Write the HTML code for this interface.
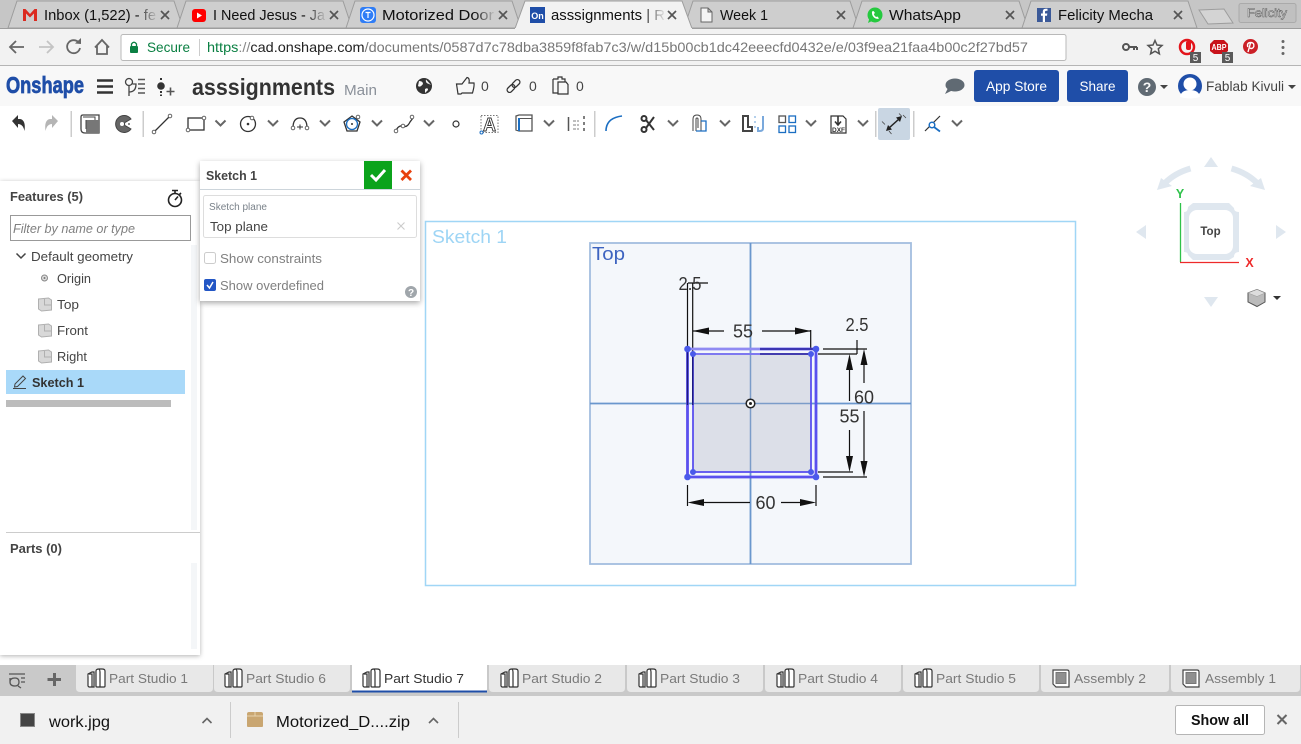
<!DOCTYPE html>
<html><head><meta charset="utf-8"><title>asssignments</title>
<style>
html,body{margin:0;padding:0;background:#fff;width:1301px;height:744px;overflow:hidden}
svg{display:block}
text{font-family:"Liberation Sans",sans-serif;white-space:pre}
</style></head><body>
<svg width="1301" height="744" viewBox="0 0 1301 744" xmlns="http://www.w3.org/2000/svg">
<defs>
<filter id="sh" x="-20%" y="-20%" width="140%" height="140%"><feDropShadow dx="0" dy="2" stdDeviation="3" flood-color="#000" flood-opacity=".35"/></filter>
<filter id="sh2" x="-10%" y="-5%" width="120%" height="110%"><feDropShadow dx="0" dy="1" stdDeviation="2.5" flood-color="#000" flood-opacity=".3"/></filter>
<linearGradient id="f1"><stop offset="0" stop-color="#cecece" stop-opacity="0"/><stop offset="1" stop-color="#cecece"/></linearGradient>
<linearGradient id="f2"><stop offset="0" stop-color="#f2f2f2" stop-opacity="0"/><stop offset="1" stop-color="#f2f2f2"/></linearGradient>
<g id="chev"><path d="M-5 -2.5L0 2.5L5 -2.5" fill="none" stroke="#666" stroke-width="2"/></g>
<g id="tx"><path d="M-4 -4L4 4M4 -4L-4 4" stroke="#555" stroke-width="1.7" fill="none"/></g>
<g id="ps" fill="#fff" stroke="#333" stroke-width="1.2"><path d="M1 6L5 4H7V19H2L1 18Z"/><path d="M1 6H5V19"/><path d="M9 3Q9 1 12 1H15Q18 1 18 3V18Q18 19 17 19H10Q9 19 9 18Z"/><path d="M12 1Q13 2 13 4V19" fill="none"/></g>
<g id="as"><path d="M1 1H15Q17 1 17 3V18H4L1 15Z" fill="#fff" stroke="#444" stroke-width="1.2"/><rect x="4" y="3.5" width="10" height="11" fill="#8f8f8f" stroke="#777"/></g>
<g id="pl"><path d="M0 1L10 0L13 2V12L3 13L0 11Z" fill="#d8d8d8" stroke="#b0b0b0"/><path d="M6 1V7H13" fill="none" stroke="#b0b0b0"/></g>
</defs>

<!-- CHROME TABS -->
<rect width="1301" height="29" fill="#c6c6c6"/>
<g fill="#cecece" stroke="#9d9d9d">
<path d="M8 28L17 1H174L183 28Z"/><path d="M177 28L186 1H343L352 28Z"/><path d="M346 28L355 1H512L521 28Z"/>
<path d="M684 28L693 1H850L859 28Z"/><path d="M853 28L862 1H1019L1028 28Z"/><path d="M1022 28L1031 1H1188L1197 28Z"/>
</g>
<path d="M1199 10L1224 9L1233 23L1208 24Z" fill="#d4d4d4" stroke="#9d9d9d"/>
<rect x="1239" y="3.5" width="57" height="19" rx="2" fill="#c0c0c0" stroke="#aaa"/>
<text x="1267" y="17" font-size="12" text-anchor="middle" fill="#f2f2f2" stroke="#555" stroke-width=".5" textLength="40" lengthAdjust="spacingAndGlyphs">Felicity</text>
<path d="M515 28.5L525 1H682L692 28.5Z" fill="#f2f2f2" stroke="#9d9d9d"/>
<g font-size="14.5" fill="#111">
<text x="44" y="20" textLength="112" lengthAdjust="spacingAndGlyphs">Inbox (1,522) - fe</text>
<text x="213" y="20" textLength="112" lengthAdjust="spacingAndGlyphs">I Need Jesus - Ja</text>
<text x="382" y="20" textLength="112" lengthAdjust="spacingAndGlyphs">Motorized Door</text>
<text x="551" y="20" textLength="114" lengthAdjust="spacingAndGlyphs">asssignments | R</text>
<text x="720" y="20" textLength="48" lengthAdjust="spacingAndGlyphs">Week 1</text>
<text x="889" y="20" textLength="72" lengthAdjust="spacingAndGlyphs">WhatsApp</text>
<text x="1058" y="20" textLength="95" lengthAdjust="spacingAndGlyphs">Felicity Mecha</text>
</g>
<rect x="136" y="5" width="22" height="20" fill="url(#f1)"/><rect x="305" y="5" width="22" height="20" fill="url(#f1)"/><rect x="474" y="5" width="22" height="20" fill="url(#f1)"/><rect x="643" y="5" width="23" height="20" fill="url(#f2)"/>
<use href="#tx" x="165" y="15"/><use href="#tx" x="334" y="15"/><use href="#tx" x="503" y="15"/><use href="#tx" x="672" y="15"/><use href="#tx" x="841" y="15"/><use href="#tx" x="1010" y="15"/><use href="#tx" x="1178" y="15"/>
<!-- favicons -->
<path d="M23 21V9H25.500L30 14L34.500 9H37V21H34V13.500L30 17.500L26 13.500V21Z" fill="#db2a20"/>
<rect x="192" y="9" width="14" height="13" rx="3" fill="#f00"/><path d="M197 12.500L202 15.500L197 18.500Z" fill="#fff"/>
<rect x="360" y="7" width="16" height="16" rx="3" fill="#2f7df6"/><circle cx="368" cy="15" r="6" fill="none" stroke="#fff" stroke-width="1.2"/><path d="M365.500 12.500H370.500M368 12.500V18" stroke="#fff" stroke-width="1.2"/>
<rect x="530" y="7" width="15" height="16" fill="#1f4ea8"/><text x="537.500" y="19" font-size="9" font-weight="700" fill="#fff" text-anchor="middle">On</text>
<path d="M701 8H708L712 12V22H701Z M708 8V12H712" fill="#f4f4f4" stroke="#666"/>
<circle cx="875" cy="15" r="7.500" fill="#25c93f"/><path d="M872 11.500Q871.500 15 874 17.500Q876.500 19.500 879 18.500L877.500 16.500L876 17Q874 15.500 873.800 14L875 13L873.500 11Z" fill="#fff"/><path d="M868 23L869.500 18L872 21Z" fill="#25c93f"/>
<rect x="1037" y="8" width="14" height="14" fill="#3b5998"/><path d="M1045 22V15.800H1047L1047.300 13.500H1045V12Q1045 10.800 1046.500 10.800H1047.500V8.800H1045.500Q1042.800 8.800 1042.800 11.800V13.500H1041V15.800H1042.800V22Z" fill="#fff"/>

<!-- CHROME ADDRESS BAR -->
<rect y="28" width="1301" height="38" fill="#f2f2f2"/>
<path d="M0 28.500H515M692 28.500H1301" stroke="#9d9d9d"/>
<rect y="65" width="1301" height="1" fill="#b5b5b5"/>
<path d="M24 47H10M16 41L10 47L16 53" fill="none" stroke="#666" stroke-width="1.800"/>
<path d="M39 47H53M47 41L53 47L47 53" fill="none" stroke="#c4c4c4" stroke-width="1.800"/>
<path d="M79 43A6.500 6.500 0 1 0 80 48" fill="none" stroke="#666" stroke-width="1.800"/><path d="M75 43.500L81 44V38Z" fill="#666"/>
<path d="M95 47.500L102 40L109 47.500M97 46V54H107V46" fill="none" stroke="#666" stroke-width="1.800"/>
<rect x="121" y="34.500" width="945" height="26" rx="2" fill="#fff" stroke="#b9b9b9"/>
<rect x="130" y="46" width="8" height="7" rx="1" fill="#0b8043"/><path d="M131.500 46V44Q134 40.500 136.500 44V46" fill="none" stroke="#0b8043" stroke-width="1.300"/>
<text x="147" y="52" font-size="14" fill="#0b8043" textLength="43" lengthAdjust="spacingAndGlyphs">Secure</text>
<rect x="199" y="39" width="1" height="17" fill="#ccc"/>
<text x="207" y="52" font-size="14" textLength="821" lengthAdjust="spacingAndGlyphs"><tspan fill="#0b8043">https</tspan><tspan fill="#888">://</tspan><tspan fill="#222">cad.onshape.com</tspan><tspan fill="#777">/documents/0587d7c78dba3859f8fab7c3/w/d15b00cb1dc42eeecfd0432e/e/03f9ea21faa4b00c2f27bd57</tspan></text>
<circle cx="1126" cy="47" r="3" fill="none" stroke="#555" stroke-width="2"/><path d="M1129 47H1137M1134 47V50M1137 47V50" stroke="#555" stroke-width="2" fill="none"/>
<path d="M1155 40.500L1157 45L1162 45.500L1158.300 48.800L1159.400 53.800L1155 51.200L1150.600 53.800L1151.700 48.800L1148 45.500L1153 45Z" fill="none" stroke="#555" stroke-width="1.500"/>
<circle cx="1187" cy="47" r="7" fill="none" stroke="#e3141b" stroke-width="2.500"/><rect x="1186" y="41" width="5" height="9" rx="2" fill="#e3141b"/>
<rect x="1190" y="52" width="11" height="11" fill="#5a5a5a"/><text x="1195.500" y="61" font-size="10" fill="#fff" text-anchor="middle">5</text>
<path d="M1214 40H1224L1228 44V51L1224 54H1214L1210 51V44Z" fill="#c8131b"/><text x="1219" y="50" font-size="8" font-weight="700" fill="#fff" text-anchor="middle" textLength="15" lengthAdjust="spacingAndGlyphs">ABP</text>
<rect x="1222" y="52" width="11" height="11" fill="#5a5a5a"/><text x="1227.500" y="61" font-size="10" fill="#fff" text-anchor="middle">5</text>
<circle cx="1250.500" cy="46.500" r="7.500" fill="#cb2027"/><path d="M1248 52L1250.500 43M1247.800 47Q1246.500 42.500 1251 42.500Q1254.500 42.800 1253.800 46.500Q1252.500 49.500 1250 48" fill="none" stroke="#fff" stroke-width="1.400"/>
<g fill="#666"><circle cx="1283" cy="41.500" r="1.500"/><circle cx="1283" cy="47.500" r="1.500"/><circle cx="1283" cy="53.500" r="1.500"/></g>

<!-- ONSHAPE HEADER -->
<rect y="66" width="1301" height="40" fill="#f8f8f8"/>
<text x="6" y="93" font-size="23" font-weight="700" fill="#1f4ea8" textLength="78" lengthAdjust="spacingAndGlyphs" stroke="#1f4ea8" stroke-width=".7">Onshape</text>
<path d="M97 80.500H113M97 86.500H113M97 92.500H113" stroke="#333" stroke-width="2.600"/>
<g fill="none" stroke="#444" stroke-width="1.300"><circle cx="129" cy="82" r="3.500"/><path d="M129 85.500V96M129 92Q136 92 136 84H132.500"/><path d="M138 79.500H145M138 84H145M138 88.500H145M138 93H145" stroke="#555" stroke-width="1.500"/></g>
<circle cx="161" cy="86" r="3.800" fill="#333"/><path d="M161 78V81M161 91V96" stroke="#333" stroke-width="2" stroke-dasharray="2 1.500"/><path d="M166.500 91.500H174.500M170.500 87.500V95.500" stroke="#555" stroke-width="1.600"/>
<text x="192" y="95" font-size="23" font-weight="700" fill="#333" textLength="143" lengthAdjust="spacingAndGlyphs">asssignments</text>
<text x="344" y="95" font-size="15" fill="#8a9099" textLength="33" lengthAdjust="spacingAndGlyphs">Main</text>
<circle cx="424" cy="86" r="8" fill="#333"/><path d="M419 81Q423 81 423 84Q420 88 418 86ZM426 79.500Q425 83 429 84L431 85M425 89Q428 87 428 90L425 93Z" fill="#f8f8f8"/>
<path d="M456.500 84H462L467 77.500Q470 78 469 83H474Q474.500 86 472.500 93H462L461 94H458Z" fill="none" stroke="#333" stroke-width="1.200"/>
<text x="481" y="91" font-size="14" fill="#444">0</text>
<g fill="none" stroke="#333" stroke-width="1.300" transform="rotate(-45 513.500 86)"><rect x="505.500" y="83.500" width="9" height="5" rx="2.500"/><rect x="512.500" y="83.500" width="9" height="5" rx="2.500"/></g>
<text x="529" y="91" font-size="14" fill="#444">0</text>
<path d="M553 79H558V77H562V79H565V82M553 79V93H558M558 82H566L568 84.500V94H558Z" fill="none" stroke="#333" stroke-width="1.200"/>
<text x="576" y="91" font-size="14" fill="#444">0</text>
<ellipse cx="955" cy="85" rx="9.500" ry="6.500" fill="#606a73"/><path d="M948 88L945 94L953 90Z" fill="#606a73"/>
<rect x="974" y="70" width="85" height="32" rx="3" fill="#1f4ea8"/><text x="1016.500" y="91" font-size="14" fill="#fff" text-anchor="middle" textLength="61" lengthAdjust="spacingAndGlyphs">App Store</text>
<rect x="1067" y="70" width="61" height="32" rx="3" fill="#1f4ea8"/><text x="1097.500" y="91" font-size="14" fill="#fff" text-anchor="middle" textLength="36" lengthAdjust="spacingAndGlyphs">Share</text>
<circle cx="1147" cy="87" r="9" fill="#606a73"/><text x="1147" y="92" font-size="14" font-weight="700" fill="#f8f8f8" text-anchor="middle">?</text>
<path d="M1160 85H1168L1164 89Z" fill="#444"/>
<circle cx="1190" cy="86" r="12" fill="#1f4ea8"/><circle cx="1190" cy="84" r="6.500" fill="#fff"/><path d="M1180 97Q1181 90 1190 90Q1199 90 1200 97Q1190 100 1180 97Z" fill="#fff"/>
<text x="1206" y="91" font-size="14" fill="#444" textLength="78" lengthAdjust="spacingAndGlyphs">Fablab Kivuli</text>
<path d="M1288 85H1296L1292 89Z" fill="#444"/>

<!-- SKETCH TOOLBAR -->
<rect y="106" width="1301" height="40" fill="#fff"/>
<path d="M12 121L18 115V119H20Q26 120 24.500 131Q23 124 18 124V128Z" fill="#333"/>
<path d="M58 121L52 115V119H50Q44 120 45.500 131Q47 124 52 124V128Z" fill="#b5b5b5"/>
<g fill="#ccc"><rect x="70.500" y="111" width="1.500" height="26"/><rect x="142.500" y="111" width="1.500" height="26"/><rect x="594" y="111" width="1.500" height="26"/><rect x="875" y="111" width="1.500" height="26"/><rect x="913" y="111" width="1.500" height="26"/></g>
<path d="M81 117Q81 115 83 115H99V133H85Q81 133 81 129Z" fill="#fff" stroke="#444" stroke-width="1.300"/><rect x="86" y="120" width="13" height="13" fill="#777"/><path d="M83 117H95V120M86 120V129" fill="none" stroke="#444"/>
<path d="M131 119A8.500 8.500 0 1 0 131 129L125 125.500Q124 124 125 122.500Z" fill="#666" stroke="#444"/><circle cx="122" cy="124" r="2" fill="#fff"/><circle cx="129" cy="124" r="1" fill="#666"/>
<g fill="none" stroke="#333" stroke-width="1.300">
<path d="M155 131L169 117"/>
<rect x="188" y="118" width="16" height="12"/>
<circle cx="248" cy="124" r="7.500"/>
<path d="M293 128Q293 118 300 118Q307 118 307 128"/><path d="M297 127H303M300 124.500V129.500" stroke-width="1"/>
<path d="M352 116L360 122L357 131H347L344 122Z"/>
<path d="M396 131Q398 125 403 126Q407 128 410 122L413 118"/>
<circle cx="456" cy="124" r="3" stroke-width="1.200"/>
</g>
<circle cx="248" cy="124" r="1.300" fill="#333"/><circle cx="352" cy="124" r="5.500" fill="none" stroke="#1b6ec2" stroke-width="1.300"/><circle cx="352" cy="124" r="1" fill="#333"/>
<g fill="#fff" stroke="#555" stroke-width=".9"><circle cx="154" cy="132" r="1.800"/><circle cx="170" cy="116" r="1.800"/><circle cx="188" cy="130" r="1.800"/><circle cx="204" cy="118" r="1.800"/><circle cx="252" cy="118" r="1.800"/><circle cx="293" cy="128" r="1.800"/><circle cx="307" cy="128" r="1.800"/><circle cx="358" cy="117" r="1.800"/><circle cx="396" cy="131" r="1.800"/><circle cx="403" cy="126" r="1.800"/><circle cx="412" cy="117" r="1.800"/></g>
<use href="#chev" x="220.500" y="123"/><use href="#chev" x="273" y="123"/><use href="#chev" x="325" y="123"/><use href="#chev" x="377" y="123"/><use href="#chev" x="429" y="123"/><use href="#chev" x="549" y="123"/><use href="#chev" x="673" y="123"/><use href="#chev" x="725" y="123"/><use href="#chev" x="811" y="123"/><use href="#chev" x="863" y="123"/><use href="#chev" x="957" y="123"/>
<rect x="481" y="115.500" width="17" height="17" fill="none" stroke="#777" stroke-dasharray="1.500 1.500"/>
<text x="489.500" y="131" font-size="18" font-weight="700" fill="#fff" stroke="#333" stroke-width=".9" text-anchor="middle">A</text>
<circle cx="481.500" cy="132.500" r="1.500" fill="#fff" stroke="#1b6ec2"/>
<path d="M516 116L519 115H532V131H519L516 130Z" fill="#fff" stroke="#555" stroke-width="1.300"/><path d="M519 118.500H532" stroke="#555" fill="none"/><path d="M519 118V131" stroke="#1b6ec2" stroke-width="2" fill="none"/>
<path d="M568.500 117V131" stroke="#555" stroke-width="1.500"/><path d="M584 116V133" stroke="#555" stroke-width="1.500" stroke-dasharray="3 3"/><path d="M573 121H579M573 125H579M573 129H579" stroke="#999" stroke-width="1.200" fill="none" stroke-dasharray="3 1"/>
<path d="M606 131Q606 118 622 116" fill="none" stroke="#1b6ec2" stroke-width="1.600"/>
<g fill="none" stroke="#333" stroke-width="2"><circle cx="644" cy="118.500" r="2.500"/><circle cx="644" cy="129.500" r="2.500"/><path d="M646 120L654 130M646 128L654 117"/></g>
<path d="M693 131V119Q693 115 697 115Q701 115 701 119V131M696 131V119Q696 118 697 118Q698 118 698 119V128" fill="none" stroke="#444" stroke-width="1"/><path d="M701 121H706V131H696" fill="none" stroke="#1b6ec2" stroke-width="1.300"/>
<path d="M743 116H748V127H752V131H743Z" fill="#fff" stroke="#444" stroke-width="2"/><path d="M755 116V131" stroke="#9cc0e6" stroke-width="1.500" stroke-dasharray="2 3"/><path d="M763 116V128Q763 131 760 131H758V127" fill="none" stroke="#7aa9dc" stroke-width="2"/>
<g fill="none" stroke="#1b6ec2" stroke-width="1.300"><rect x="779" y="116" width="6.500" height="6.500" stroke="#555"/><rect x="789" y="116" width="6.500" height="6.500"/><rect x="779" y="126" width="6.500" height="6.500"/><rect x="789" y="126" width="6.500" height="6.500"/></g>
<path d="M831 116H843L846 119V133H831Z" fill="#fff" stroke="#333" stroke-width="1.200"/><path d="M838 116V124M835 121.500L838 125L841 121.500" stroke="#333" stroke-width="1.600" fill="none"/><text x="838.500" y="132" font-size="6.500" font-weight="700" fill="#333" text-anchor="middle">DXF</text>
<rect x="878" y="108" width="32" height="32" rx="2" fill="#c9d6e3"/>
<path d="M889 128L899 119" stroke="#222" stroke-width="1.500"/><path d="M886 131L888 125L892 129.500ZM902 116L900 122L896 117.500Z" fill="#222"/><path d="M885 124.500L882 121.500M903 115L906 118M889 131L891.500 134M899 113.500L901.500 116" stroke="#444" stroke-width=".8" fill="none"/>
<path d="M925 131L940 116" stroke="#333" stroke-width="1.200"/><path d="M934 127L940 131.500" stroke="#1b6ec2" stroke-width="1.800"/><circle cx="932" cy="125" r="2.800" fill="#fff" stroke="#1b6ec2" stroke-width="1.500"/>

<!-- CANVAS -->
<rect x="425.500" y="221.500" width="650" height="364" fill="#fff" stroke="#a0d6f6" stroke-width="1.500"/>
<text x="432" y="243" font-size="18" fill="#9ed5f5" textLength="75" lengthAdjust="spacingAndGlyphs">Sketch 1</text>
<rect x="590" y="243" width="321" height="321" fill="#f4f7fb" stroke="#a3bddf" stroke-width="1.800"/>
<path d="M750.500 243V564M590 403.500H911" stroke="#6a97cd" stroke-width="1.800"/>
<text x="592" y="260" font-size="18.500" fill="#3d63c0" textLength="33" lengthAdjust="spacingAndGlyphs">Top</text>
<rect x="693" y="354" width="118" height="118" fill="#dcdfe8"/>
<path d="M750.500 354V472M693 403.500H811" stroke="#7b9cc9" stroke-width="1.500"/>
<g stroke="#111" stroke-width="1.200" fill="none">
<path d="M687.500 283V405M692.700 283V405M688 283H708"/>
<path d="M692.700 331H724M762 331H810.700M810.700 330V349"/>
<path d="M823 349H867M818 354H857M857 340V354M760 349H816M760 354H811"/>
<path d="M849.500 370V401M849.500 430V456M864 365V383M864 411V462"/>
<path d="M818 472H853M823 477H867"/>
<path d="M687.500 485V506M816 485V506M704 502.500H750M781 502.500H800"/>
</g>
<g fill="#111">
<path d="M692.700 331L709 327.500V334.500Z"/><path d="M810.700 331L795 327.500V334.500Z"/>
<path d="M849.500 354L846 370H853Z"/><path d="M849.500 472L846 456H853Z"/>
<path d="M864 349L860.500 365H867.500Z"/><path d="M864 477L860.500 461H867.500Z"/>
<path d="M687.500 502.500L704 499V506Z"/><path d="M816 502.500L800 499V506Z"/>
</g>
<g fill="none" stroke="#5a50ee" stroke-width="1.800"><rect x="693" y="354" width="118" height="118"/></g>
<path d="M687.500 349V477H816V349H760" fill="none" stroke="#5a50ee" stroke-width="2.800"/>
<path d="M687.500 349H760" stroke="#8f8af2" stroke-width="2.800"/>
<path d="M692.700 354H760" stroke="#7f7af0" stroke-width="1.800"/>
<path d="M687.500 349V405M692.700 354V405" stroke="#1d1a80" stroke-width="1.400"/>
<path d="M760 349H816M760 354H811" stroke="#2a2590" stroke-width="1.300"/>
<g fill="#4a5aea"><circle cx="687.500" cy="349" r="3.300"/><circle cx="816" cy="349" r="3.300"/><circle cx="687.500" cy="477" r="3.300"/><circle cx="816" cy="477" r="3.300"/><circle cx="693" cy="354" r="3"/><circle cx="811" cy="354" r="3"/><circle cx="693" cy="472" r="3"/><circle cx="811" cy="472" r="3"/></g>
<circle cx="750.500" cy="403.500" r="4.300" fill="#fff" stroke="#222" stroke-width="1.500"/><circle cx="750.500" cy="403.500" r="1.500" fill="#222"/>
<g font-size="18" fill="#333" text-anchor="middle" lengthAdjust="spacingAndGlyphs">
<text x="690" y="290" textLength="23" lengthAdjust="spacingAndGlyphs">2.5</text>
<text x="743" y="337.500" textLength="20" lengthAdjust="spacingAndGlyphs">55</text>
<text x="857" y="331" textLength="23" lengthAdjust="spacingAndGlyphs">2.5</text>
<text x="849.500" y="422.500" textLength="20" lengthAdjust="spacingAndGlyphs">55</text>
<text x="864" y="403.500" textLength="20" lengthAdjust="spacingAndGlyphs">60</text>
<text x="765.500" y="509" textLength="20" lengthAdjust="spacingAndGlyphs">60</text>
</g>

<!-- VIEW CUBE -->
<g fill="#dfe7ef">
<path d="M1211 157L1218 167H1204Z"/>
<path d="M1136 232L1146 225V239Z"/><path d="M1286 232L1276 225V239Z"/>
<path d="M1211 307L1204 297H1218Z"/>
<path d="M1157 190L1161 178L1172 186Z"/><path d="M1265 190L1261 178L1250 186Z"/>
<path d="M1193 203H1229L1234 208Q1234 212 1239 212V252Q1234 252 1234 257L1229 260H1193L1188 255Q1188 252 1184 252V212Q1188 212 1188 207Z"/>
</g>
<path d="M1190.500 168.500Q1175 173 1165 183M1231.500 168.500Q1247 173 1257 183" fill="none" stroke="#dfe7ef" stroke-width="6"/>
<rect x="1189" y="210" width="44" height="44" rx="8" fill="#fff"/>
<path d="M1180.500 203V262" stroke="#2fc24a" stroke-width="1.300"/><path d="M1180 262.500H1239" stroke="#ee2a2a" stroke-width="1.300"/>
<text x="1180" y="198" font-size="12.500" font-weight="700" fill="#2fc24a" text-anchor="middle">Y</text>
<text x="1249.500" y="267" font-size="12.500" font-weight="700" fill="#ee2a2a" text-anchor="middle">X</text>
<text x="1210.500" y="235" font-size="11.500" font-weight="700" fill="#444" text-anchor="middle">Top</text>
<path d="M1248 293L1257 289.500L1265 293V302L1257 306.500L1248 302Z" fill="#bbb" stroke="#555" stroke-width="1"/><path d="M1248 293L1257 296.500L1265 293L1257 289.500Z" fill="#ddd" stroke="#999" stroke-width=".5"/>
<path d="M1273 296H1281L1277 300Z" fill="#333"/>

<!-- FEATURE PANEL -->
<rect x="0" y="181" width="200" height="474" fill="#fff" filter="url(#sh2)"/>
<rect x="191" y="245" width="6" height="285" fill="#f4f6f8"/><rect x="191" y="563" width="6" height="86" fill="#f4f6f8"/>
<text x="10" y="201" font-size="13" font-weight="700" fill="#444" textLength="73" lengthAdjust="spacingAndGlyphs">Features (5)</text>
<circle cx="175" cy="200" r="6.500" fill="none" stroke="#222" stroke-width="1.600"/><path d="M172 190.500H178M175 191V193.500M175 200L178 196.500M181 193L179.500 194.500" stroke="#222" stroke-width="1.600" fill="none"/>
<rect x="10.500" y="215.500" width="180" height="25" fill="#fff" stroke="#999"/>
<text x="13" y="233" font-size="13" font-style="italic" fill="#808080" textLength="122" lengthAdjust="spacingAndGlyphs">Filter by name or type</text>
<path d="M16.500 253.500L21 258L25.500 253.500" fill="none" stroke="#444" stroke-width="1.500"/>
<g font-size="13" fill="#444">
<text x="31" y="261" textLength="102" lengthAdjust="spacingAndGlyphs">Default geometry</text>
<text x="57" y="283" textLength="34" lengthAdjust="spacingAndGlyphs">Origin</text>
<text x="57" y="309" textLength="22" lengthAdjust="spacingAndGlyphs">Top</text>
<text x="57" y="335" textLength="31" lengthAdjust="spacingAndGlyphs">Front</text>
<text x="57" y="361" textLength="30" lengthAdjust="spacingAndGlyphs">Right</text>
</g>
<circle cx="44.500" cy="278" r="3" fill="#ddd" stroke="#888"/><circle cx="44.500" cy="278" r="1" fill="#777"/>
<use href="#pl" x="38.500" y="298"/><use href="#pl" x="38.500" y="324"/><use href="#pl" x="38.500" y="350"/>
<rect x="6" y="370" width="179" height="24" fill="#a9d9f9"/>
<path d="M15 384L23 376L25.500 378.500L17.500 386.500L14.500 387ZM13 388.500H26" fill="none" stroke="#444" stroke-width="1"/>
<text x="32" y="387" font-size="12.500" font-weight="700" fill="#333" textLength="52" lengthAdjust="spacingAndGlyphs">Sketch 1</text>
<rect x="6" y="400" width="165" height="7" fill="#bcbcbc"/>
<rect x="6" y="532" width="194" height="1" fill="#ccc"/>
<text x="10" y="553" font-size="13" font-weight="700" fill="#444" textLength="52" lengthAdjust="spacingAndGlyphs">Parts (0)</text>

<!-- SKETCH DIALOG -->
<rect x="200" y="161" width="220" height="140" fill="#fff" filter="url(#sh)"/>
<text x="206" y="180" font-size="13" font-weight="700" fill="#444" textLength="51" lengthAdjust="spacingAndGlyphs">Sketch 1</text>
<rect x="364" y="161" width="28" height="28" fill="#0ba31b"/>
<path d="M371 175L376 180L385 170" fill="none" stroke="#fff" stroke-width="3"/>
<path d="M401.500 170.500L411 180M411 170.500L401.500 180" stroke="#e8400c" stroke-width="2.800"/>
<rect x="200" y="189" width="220" height="1" fill="#cdd5db"/>
<rect x="203.500" y="195.500" width="213" height="42" rx="2" fill="#fff" stroke="#ddd"/>
<text x="209" y="210" font-size="10" fill="#7a828a" textLength="58" lengthAdjust="spacingAndGlyphs">Sketch plane</text>
<text x="210" y="231" font-size="13" fill="#444" textLength="58" lengthAdjust="spacingAndGlyphs">Top plane</text>
<path d="M397.500 222.500L404.500 229.500M404.500 222.500L397.500 229.500" stroke="#ccc" stroke-width="1.100"/>
<rect x="204.500" y="252.500" width="11" height="11" rx="2" fill="#fff" stroke="#ccc"/>
<text x="220" y="263" font-size="13" fill="#808080" textLength="102" lengthAdjust="spacingAndGlyphs">Show constraints</text>
<rect x="204" y="279" width="12" height="12" rx="2" fill="#2356c5"/><path d="M207 285L209.500 288L213 282" fill="none" stroke="#fff" stroke-width="1.500"/>
<text x="220" y="290" font-size="13" fill="#808080" textLength="104" lengthAdjust="spacingAndGlyphs">Show overdefined</text>
<circle cx="411" cy="292" r="6" fill="#a0a6ab"/><text x="411" y="296" font-size="10" font-weight="700" fill="#fff" text-anchor="middle">?</text>

<!-- DOC TABS -->
<rect y="665" width="1301" height="31" fill="#c9c9c9"/>
<g fill="none" stroke="#555" stroke-width="1.300"><path d="M9 674H25M10 678V682Q10 686 15 686Q19 686 19 682Q19 678 15 678Q10 678 10 682M18 686L21 688M21 678H25M21 682H25"/></g>
<path d="M47.500 679.500H61M54.500 673V686" stroke="#666" stroke-width="3"/>
<g fill="#e8e8e8">
<path d="M76 665H213V688Q213 692 209 692H80Q76 692 76 688Z"/><path d="M214 665H350V688Q350 692 346 692H218Q214 692 214 688Z"/>
<path d="M489 665H625V688Q625 692 621 692H493Q489 692 489 688Z"/><path d="M627 665H763V688Q763 692 759 692H631Q627 692 627 688Z"/><path d="M765 665H901V688Q901 692 897 692H769Q765 692 765 688Z"/><path d="M903 665H1039V688Q1039 692 1035 692H907Q903 692 903 688Z"/><path d="M1041 665H1169V688Q1169 692 1165 692H1045Q1041 692 1041 688Z"/><path d="M1171 665H1300V688Q1300 692 1296 692H1175Q1171 692 1171 688Z"/>
</g>
<path d="M352 665H487V689Q487 692 484 692H355Q352 692 352 689Z" fill="#fff"/><rect x="352" y="690.500" width="135" height="2" fill="#1f4ea8"/>
<use href="#ps" x="87" y="668"/><use href="#ps" x="224" y="668"/><use href="#ps" x="362" y="668"/><use href="#ps" x="500" y="668"/><use href="#ps" x="638" y="668"/><use href="#ps" x="776" y="668"/><use href="#ps" x="914" y="668"/>
<use href="#as" x="1052" y="669"/><use href="#as" x="1182" y="669"/>
<g font-size="13" fill="#7a7a7a">
<text x="109" y="683" textLength="79" lengthAdjust="spacingAndGlyphs">Part Studio 1</text>
<text x="246" y="683" textLength="80" lengthAdjust="spacingAndGlyphs">Part Studio 6</text>
<text x="384" y="683" textLength="80" lengthAdjust="spacingAndGlyphs" fill="#333">Part Studio 7</text>
<text x="522" y="683" textLength="80" lengthAdjust="spacingAndGlyphs">Part Studio 2</text>
<text x="660" y="683" textLength="80" lengthAdjust="spacingAndGlyphs">Part Studio 3</text>
<text x="798" y="683" textLength="80" lengthAdjust="spacingAndGlyphs">Part Studio 4</text>
<text x="936" y="683" textLength="80" lengthAdjust="spacingAndGlyphs">Part Studio 5</text>
<text x="1074" y="683" textLength="72" lengthAdjust="spacingAndGlyphs">Assembly 2</text>
<text x="1205" y="683" textLength="71" lengthAdjust="spacingAndGlyphs">Assembly 1</text>
</g>

<!-- DOWNLOADS BAR -->
<rect y="696" width="1301" height="48" fill="#f1f1f1"/>
<rect x="20.500" y="713.500" width="14" height="13" fill="#444" stroke="#888"/>
<text x="49" y="727" font-size="16" fill="#111" textLength="61" lengthAdjust="spacingAndGlyphs">work.jpg</text>
<path d="M202.500 723L207 718.500L211.500 723" fill="none" stroke="#666" stroke-width="1.600"/>
<rect x="230" y="702" width="1" height="36" fill="#ccc"/>
<path d="M247 714Q247 712 249 712H261Q263 712 263 714V726Q263 727 262 727H248Q247 727 247 726Z" fill="#c9a671"/><path d="M247 716H263M255 712V716" stroke="#e6d3ad" stroke-width="1"/>
<text x="276" y="727" font-size="16" fill="#111" textLength="134" lengthAdjust="spacingAndGlyphs">Motorized_D....zip</text>
<path d="M429 723L433.500 718.500L438 723" fill="none" stroke="#666" stroke-width="1.600"/>
<rect x="458" y="702" width="1" height="36" fill="#ccc"/>
<rect x="1175.500" y="705.500" width="89" height="29" rx="2" fill="#fff" stroke="#b5b5b5"/>
<text x="1220" y="725" font-size="14.500" font-weight="700" fill="#111" text-anchor="middle" textLength="58" lengthAdjust="spacingAndGlyphs">Show all</text>
<path d="M1277.500 715L1286.500 724M1286.500 715L1277.500 724" stroke="#666" stroke-width="2"/>
</svg>
</body></html>
